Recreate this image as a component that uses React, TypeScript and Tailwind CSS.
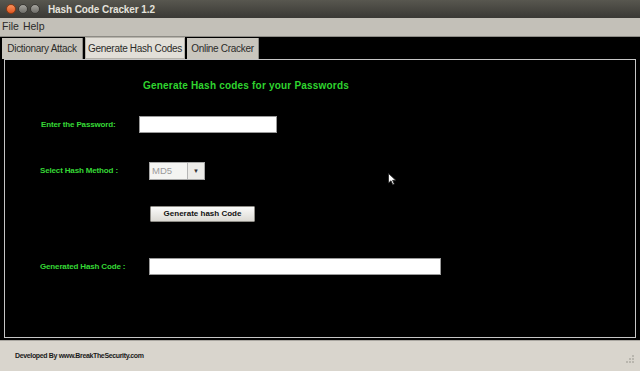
import React from 'react';

const GREEN = 'text-[#36d836]';

function Field({ label, labelW, pl, children }: { label: string; labelW: number; pl: number; children: React.ReactNode }) {
  return (
    <div className="flex items-center" style={{ paddingLeft: pl }}>
      <div className={`${GREEN} font-bold text-[8px] tracking-[-0.15px] shrink-0 whitespace-nowrap`} style={{ width: labelW }}>
        {label}
      </div>
      {children}
    </div>
  );
}

export default function App() {
  return (
    <div className="w-[640px] h-[371px] bg-black flex flex-col overflow-hidden relative" style={{ fontFamily: '"Liberation Sans", Arial, sans-serif' }}>
      {/* Title bar */}
      <div className="h-[18px] shrink-0 flex items-center bg-gradient-to-b from-[#58574f] to-[#3a3935] px-[6px]">
        <div className="flex items-center gap-[2px]">
          <span className="w-[10px] h-[10px] rounded-full bg-gradient-to-b from-[#f7905a] to-[#e0561e] border border-[#8c3a14]" />
          <span className="w-[10px] h-[10px] rounded-full bg-gradient-to-b from-[#a6a59f] to-[#6e6d68] border border-[#3a3935]" />
          <span className="w-[10px] h-[10px] rounded-full bg-gradient-to-b from-[#a6a59f] to-[#6e6d68] border border-[#3a3935]" />
        </div>
        <span className="ml-[8px] text-[10px] font-bold text-[#e4e2dc] tracking-[-0.1px] whitespace-nowrap">Hash Code Cracker 1.2</span>
      </div>

      {/* Menu bar */}
      <div className="h-[18px] shrink-0 bg-[#c3c0b8] flex items-center pl-[2px] text-[10.5px] text-[#2a2a28] gap-[4px]">
        <span>File</span>
        <span>Help</span>
      </div>

      {/* Tabs */}
      <div className="h-[23px] shrink-0 flex items-end pl-[2px] gap-[2px] bg-black border-t border-[#8d8b85]">
        <div className="h-[21px] w-[81px] bg-[#c9c6be] flex items-center justify-center text-[10px] text-[#2b2b29] tracking-[-0.3px] whitespace-nowrap border-r border-[#8d8b85]">
          Dictionary Attack
        </div>
        <div className="h-[22px] w-[100px] bg-[#e2dfd8] border border-[#b5b2aa] flex items-center justify-center text-[10px] text-[#2b2b29] tracking-[-0.3px] whitespace-nowrap">
          Generate Hash Codes
        </div>
        <div className="h-[21px] w-[72px] bg-[#c9c6be] flex items-center justify-center text-[10px] text-[#2b2b29] tracking-[-0.3px] whitespace-nowrap border-r border-[#8d8b85]">
          Online Cracker
        </div>
      </div>

      {/* Panel */}
      <div className="h-[279px] shrink-0 mx-[4px] border border-[#c6c6c6] bg-black flex flex-col relative">
        <div className="pl-[138px] pt-[20px] leading-[12px] text-[10px] font-bold text-[#2fd52f] tracking-[0.2px] whitespace-nowrap">
          Generate Hash codes for your Passwords
        </div>

        <div className="mt-[24px]">
          <Field label="Enter the Password:" labelW={98} pl={36}>
            <div className="w-[138px] h-[17px] bg-white border border-[#9a9a9a]" />
          </Field>
        </div>

        <div className="mt-[29px]">
          <Field label="Select Hash Method :" labelW={109} pl={35}>
            <div className="w-[56px] h-[18px] bg-[#f4f4f2] border border-[#a8a8a8] flex">
              <span className="flex-1 text-[9.5px] text-[#9a9a9a] pl-[2px] leading-[16px]">MD5</span>
              <span className="w-[17px] border-l border-[#b5b5b5] bg-[#ecebe8] flex items-center justify-center text-[6px] text-[#333]">▼</span>
            </div>
          </Field>
        </div>

        <div className="mt-[26px] pl-[145px]">
          <div className="w-[105px] h-[16px] rounded-[1px] bg-gradient-to-b from-[#fbfbfa] to-[#dcdad4] border border-[#8e8c86] flex items-center justify-center text-[8px] font-bold text-[#111] whitespace-nowrap">
            Generate hash Code
          </div>
        </div>

        <div className="mt-[36px]">
          <Field label="Generated Hash Code :" labelW={109} pl={35}>
            <div className="w-[292px] h-[17px] bg-white border border-[#9a9a9a]" />
          </Field>
        </div>

        {/* mouse pointer */}
        <svg className="absolute left-[383px] top-[113px]" width="9" height="13" viewBox="0 0 9 13">
          <path d="M0.5 0.5 L0.5 10 L3 7.8 L4.8 11.8 L6.3 11.1 L4.6 7.3 L7.8 7.3 Z" fill="#ffffff" stroke="#222" strokeWidth="0.8" />
        </svg>
      </div>

      {/* Footer */}
      <div className="flex-1 mt-[2px] bg-[#d9d5cd] border-t border-[#a9a6a0] flex items-center pl-[15px] relative">
        <span className="text-[7px] font-bold text-[#1a1a1a] tracking-[-0.35px] whitespace-nowrap">Developed By www.BreakTheSecurity.com</span>
        <div className="absolute right-[6px] bottom-[8px] grid grid-cols-3 gap-[1px]">
          <span className="w-[2px] h-[2px]" />
          <span className="w-[2px] h-[2px]" />
          <span className="w-[2px] h-[2px] bg-[#b9b6ae]" />
          <span className="w-[2px] h-[2px]" />
          <span className="w-[2px] h-[2px] bg-[#b9b6ae]" />
          <span className="w-[2px] h-[2px] bg-[#b9b6ae]" />
          <span className="w-[2px] h-[2px] bg-[#b9b6ae]" />
          <span className="w-[2px] h-[2px] bg-[#b9b6ae]" />
          <span className="w-[2px] h-[2px] bg-[#b9b6ae]" />
        </div>
      </div>
    </div>
  );
}
